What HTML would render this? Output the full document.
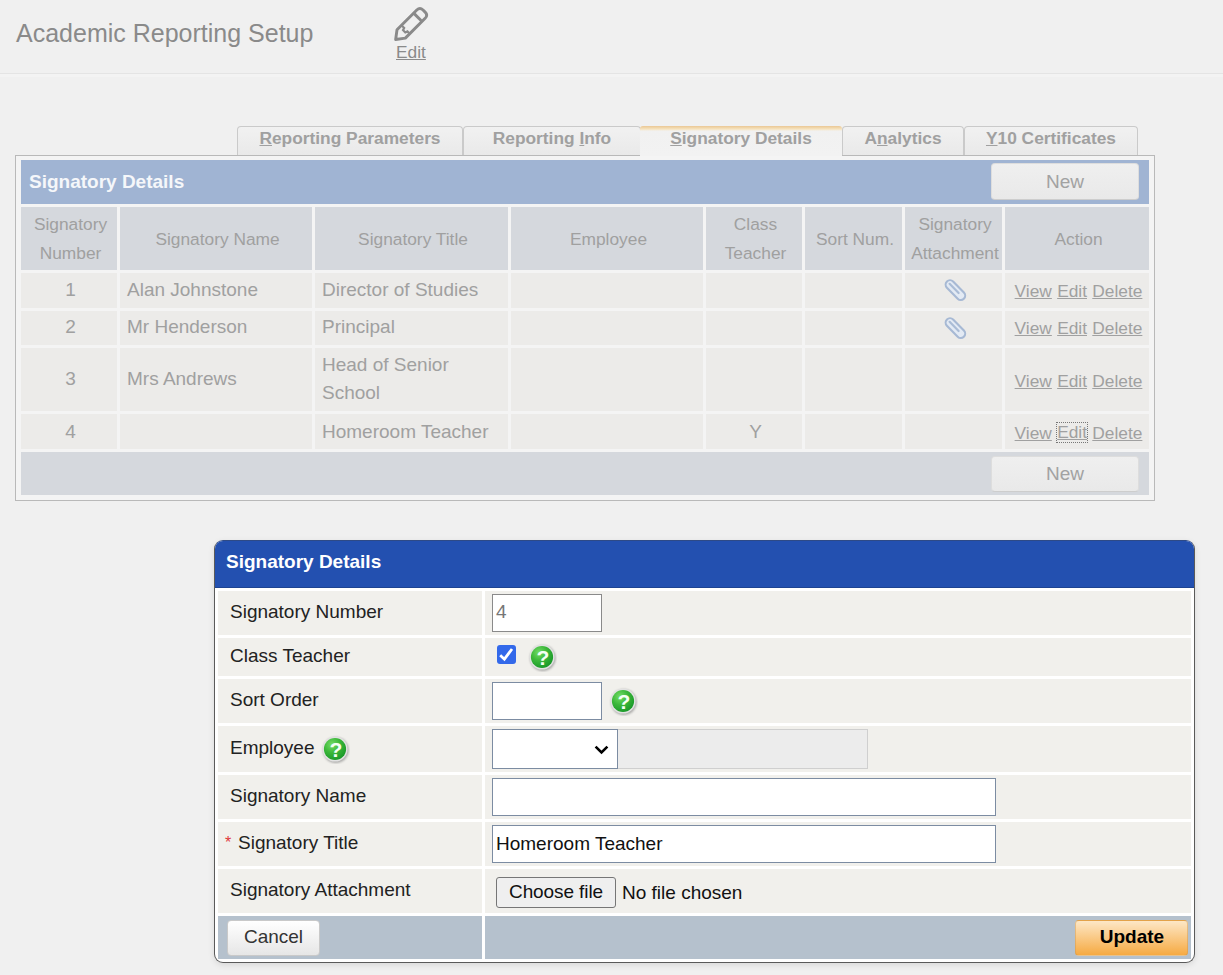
<!DOCTYPE html>
<html><head><meta charset="utf-8">
<style>
*{box-sizing:border-box}
html,body{margin:0;padding:0}
body{width:1223px;height:975px;background:#f0f0f0;position:relative;overflow:hidden;font-family:"Liberation Sans",sans-serif}
.a{position:absolute}
.c{position:absolute;display:flex;align-items:center}
.ctr{justify-content:center;text-align:center}
#title{left:16px;top:19px;font-size:25px;line-height:28px;color:#8a8a8a;white-space:nowrap}
#hline{left:0;top:73px;width:1223px;height:1px;background:#e4e4e4}
#hline2{left:0;top:74px;width:1223px;height:3px;background:#f3f3f3}
#editlink{left:396px;top:42px;font-size:17.33px;line-height:20px;color:#8a8a8a;text-decoration:underline}
.tab{position:absolute;top:126px;height:30px;border:1px solid #cacaca;border-bottom:none;border-radius:4px 4px 0 0;background:linear-gradient(#f1f1f1,#e9e9e9);font-weight:bold;font-size:17.33px;color:#a0a0a0;text-align:center;line-height:22px}
.tab.act{background:linear-gradient(#eac796 0,#f2d9ad 2px,#f6e6c8 3.5px,#f1f1f1 5px,#f2f2f2 100%);border:none;border-radius:3px 3px 0 0;height:30px;line-height:24px}
.tab u{text-decoration:underline}
#box{left:15px;top:155px;width:1140px;height:346px;border:1px solid #b9b9b9;background:#f4f4f4}
.th{background:#d5d8dd;color:#a0a0a0;font-size:17.33px;line-height:29px;padding-left:3px;padding-top:1px}
.td{background:#ecebe9;color:#a0a0a0;font-size:19px;line-height:28px;padding-bottom:2px}
.btnN{position:absolute;background:linear-gradient(#efefef,#e9e9e9);border:1px solid #dddddd;border-bottom-color:#cdcdcd;border-radius:4px;color:#a2a2a2;font-size:19px;display:flex;align-items:center;justify-content:center}
.lk{color:#a0a0a0;text-decoration:underline;font-size:17.33px}
#form{left:214px;top:540px;width:981px;height:423px;border:1px solid #5a5a5a;border-top-color:#2e4a86;border-radius:9px;background:#fff;overflow:hidden;box-shadow:0 2px 6px rgba(0,0,0,0.10)}
.fl{background:#f1f0ec;color:#222;font-size:19px}
.fi{background:#f1f0ec}
.inp{position:absolute;background:#fff;border:1px solid #7f8ea3}
.help{position:absolute;width:27px;height:27px}
</style></head>
<body>
<div id="title" class="a">Academic Reporting Setup</div>
<svg class="a" style="left:390px;top:3px" width="44" height="42" viewBox="0 0 44 42">
  <g transform="matrix(0.7071,-0.7071,0.7071,0.7071,0,0)" fill="none" stroke="#8a8a8a" stroke-width="2.9" stroke-linejoin="round">
    <path d="M-14 23.9 L14 23.9 Q18.4 23.9 18.4 28.3 L18.4 31.3 Q18.4 35.7 14 35.7 L-14 35.7 L-21.8 29.8 Z"/>
    <path d="M9.6 23.9 L9.6 35.7"/>
    <path d="M-7.6 24.2 L-7.6 27.6 L-10 28.4 L-10 31.6 L-7.8 32.4 L-7.8 35.4" stroke-width="2.2" stroke-linejoin="miter"/>
  </g>
</svg>
<div id="editlink" class="a">Edit</div>
<div id="hline" class="a"></div>
<div id="hline2" class="a"></div>

<!-- tabs -->
<div class="tab" style="left:237px;width:226px"><u>R</u>eporting Parameters</div>
<div class="tab" style="left:463px;width:178px">Reporting <u>I</u>nfo</div>
<div class="tab" style="left:842px;width:122px">A<u>n</u>alytics</div>
<div class="tab" style="left:964px;width:174px"><u>Y</u>10 Certificates</div>

<div id="box" class="a"></div>
<div class="tab act" style="left:640px;width:202px;top:126px;height:30px"><u>S</u>ignatory Details</div>

<!-- table -->
<div class="c" style="left:21px;top:160px;width:1128px;height:44px;background:#a0b4d3;color:#f5f7fa;font-weight:bold;font-size:19px;padding-left:8px">Signatory Details</div>
<div class="btnN" style="left:991px;top:163px;width:148px;height:37px">New</div>

<div class="c ctr th" style="left:21px;top:207px;width:96px;height:63px">Signatory<br>Number</div>
<div class="c ctr th" style="left:120px;top:207px;width:192px;height:63px">Signatory Name</div>
<div class="c ctr th" style="left:315px;top:207px;width:193px;height:63px">Signatory Title</div>
<div class="c ctr th" style="left:511px;top:207px;width:192px;height:63px">Employee</div>
<div class="c ctr th" style="left:706px;top:207px;width:96px;height:63px">Class<br>Teacher</div>
<div class="c ctr th" style="left:805px;top:207px;width:97px;height:63px">Sort Num.</div>
<div class="c ctr th" style="left:905px;top:207px;width:97px;height:63px">Signatory<br>Attachment</div>
<div class="c ctr th" style="left:1005px;top:207px;width:144px;height:63px">Action</div>

<!-- rows generated -->
<div class="c td ctr" style="left:21px;top:273px;width:96px;height:35px;padding-left:3px;">1</div>
<div class="c td" style="left:120px;top:273px;width:192px;height:35px;padding-left:7px;">Alan Johnstone</div>
<div class="c td" style="left:315px;top:273px;width:193px;height:35px;padding-left:7px;">Director of Studies</div>
<div class="c td" style="left:511px;top:273px;width:192px;height:35px;padding-left:7px;"></div>
<div class="c td ctr" style="left:706px;top:273px;width:96px;height:35px;padding-left:3px;"></div>
<div class="c td" style="left:805px;top:273px;width:97px;height:35px;padding-left:7px;"></div>
<div class="c td ctr" style="left:905px;top:273px;width:97px;height:35px;padding-left:3px;"><svg width="28" height="28" viewBox="0 0 28 28" style="margin-left:0px;margin-top:1px"><g stroke-linecap="round" fill="none"><path d="M9 8.6 L19.8 19.6" stroke="#a7b9d4" stroke-width="10.8"/><path d="M9 8.6 L19.8 19.6" stroke="#e3eaf4" stroke-width="6.6"/><path d="M8.6 7.8 L17.6 17" stroke="#aabcd6" stroke-width="2.2"/></g></svg></div>
<div class="c td ctr" style="left:1005px;top:273px;width:144px;height:35px;padding-left:3px;padding-bottom:0;padding-top:0;"><span class="lk">View</span>&nbsp;<span class="lk">Edit</span>&nbsp;<span class="lk">Delete</span></div>
<div class="c td ctr" style="left:21px;top:311px;width:96px;height:34px;padding-left:3px;">2</div>
<div class="c td" style="left:120px;top:311px;width:192px;height:34px;padding-left:7px;">Mr Henderson</div>
<div class="c td" style="left:315px;top:311px;width:193px;height:34px;padding-left:7px;">Principal</div>
<div class="c td" style="left:511px;top:311px;width:192px;height:34px;padding-left:7px;"></div>
<div class="c td ctr" style="left:706px;top:311px;width:96px;height:34px;padding-left:3px;"></div>
<div class="c td" style="left:805px;top:311px;width:97px;height:34px;padding-left:7px;"></div>
<div class="c td ctr" style="left:905px;top:311px;width:97px;height:34px;padding-left:3px;"><svg width="28" height="28" viewBox="0 0 28 28" style="margin-left:0px;margin-top:1px"><g stroke-linecap="round" fill="none"><path d="M9 8.6 L19.8 19.6" stroke="#a7b9d4" stroke-width="10.8"/><path d="M9 8.6 L19.8 19.6" stroke="#e3eaf4" stroke-width="6.6"/><path d="M8.6 7.8 L17.6 17" stroke="#aabcd6" stroke-width="2.2"/></g></svg></div>
<div class="c td ctr" style="left:1005px;top:311px;width:144px;height:34px;padding-left:3px;padding-bottom:0;padding-top:0;"><span class="lk">View</span>&nbsp;<span class="lk">Edit</span>&nbsp;<span class="lk">Delete</span></div>
<div class="c td ctr" style="left:21px;top:348px;width:96px;height:63px;padding-left:3px;">3</div>
<div class="c td" style="left:120px;top:348px;width:192px;height:63px;padding-left:7px;">Mrs Andrews</div>
<div class="c td" style="left:315px;top:348px;width:193px;height:63px;padding-left:7px;">Head of Senior<br>School</div>
<div class="c td" style="left:511px;top:348px;width:192px;height:63px;padding-left:7px;"></div>
<div class="c td ctr" style="left:706px;top:348px;width:96px;height:63px;padding-left:3px;"></div>
<div class="c td" style="left:805px;top:348px;width:97px;height:63px;padding-left:7px;"></div>
<div class="c td ctr" style="left:905px;top:348px;width:97px;height:63px;padding-left:3px;"></div>
<div class="c td ctr" style="left:1005px;top:348px;width:144px;height:63px;padding-left:3px;padding-bottom:0;padding-top:2px;"><span class="lk">View</span>&nbsp;<span class="lk">Edit</span>&nbsp;<span class="lk">Delete</span></div>
<div class="c td ctr" style="left:21px;top:414px;width:96px;height:35px;padding-left:3px;padding-bottom:0px;padding-top:1px;">4</div>
<div class="c td" style="left:120px;top:414px;width:192px;height:35px;padding-left:7px;padding-bottom:0px;padding-top:1px;"></div>
<div class="c td" style="left:315px;top:414px;width:193px;height:35px;padding-left:7px;padding-bottom:0px;padding-top:1px;">Homeroom Teacher</div>
<div class="c td" style="left:511px;top:414px;width:192px;height:35px;padding-left:7px;padding-bottom:0px;padding-top:1px;"></div>
<div class="c td ctr" style="left:706px;top:414px;width:96px;height:35px;padding-left:3px;padding-bottom:0px;padding-top:1px;">Y</div>
<div class="c td" style="left:805px;top:414px;width:97px;height:35px;padding-left:7px;padding-bottom:0px;padding-top:1px;"></div>
<div class="c td ctr" style="left:905px;top:414px;width:97px;height:35px;padding-left:3px;padding-bottom:0px;padding-top:1px;"></div>
<div class="c td ctr" style="left:1005px;top:414px;width:144px;height:35px;padding-left:3px;padding-bottom:0;padding-top:2px;"><span class="lk">View</span>&nbsp;<span class="lk" style="outline:1px dotted #777;outline-offset:0;line-height:19px">Edit</span>&nbsp;<span class="lk">Delete</span></div>

<div class="c" style="left:21px;top:452px;width:1128px;height:43px;background:#d5d8dd"></div>
<div class="btnN" style="left:991px;top:456px;width:148px;height:36px">New</div>

<!-- form -->
<div id="form" class="a">
<div class="c" style="left:0px;top:0px;width:979px;height:47px;background:#2350b0;border-bottom:1px solid #1d4391;color:#fff;font-weight:bold;font-size:19px;padding-left:11px;padding-bottom:5px">Signatory Details</div>
<div class="c fl" style="left:3px;top:50px;width:264px;height:44px;padding-left:12px;padding-bottom:2px">Signatory Number</div>
<div class="c fi" style="left:270px;top:50px;width:706px;height:44px;"></div>
<div class="c fl" style="left:3px;top:97px;width:264px;height:38px;padding-left:12px;padding-bottom:2px">Class Teacher</div>
<div class="c fi" style="left:270px;top:97px;width:706px;height:38px;"></div>
<div class="c fl" style="left:3px;top:138px;width:264px;height:44px;padding-left:12px;padding-bottom:2px">Sort Order</div>
<div class="c fi" style="left:270px;top:138px;width:706px;height:44px;"></div>
<div class="c fl" style="left:3px;top:185px;width:264px;height:46px;padding-left:12px;padding-bottom:3px">Employee</div>
<div class="c fi" style="left:270px;top:185px;width:706px;height:46px;"></div>
<div class="c fl" style="left:3px;top:234px;width:264px;height:44px;padding-left:12px;padding-bottom:2px">Signatory Name</div>
<div class="c fi" style="left:270px;top:234px;width:706px;height:44px;"></div>
<div class="c fl" style="left:3px;top:281px;width:264px;height:44px;padding-left:20px;padding-bottom:2px">Signatory Title</div>
<div class="c fi" style="left:270px;top:281px;width:706px;height:44px;"></div>
<div class="c fl" style="left:3px;top:328px;width:264px;height:44px;padding-left:12px;padding-bottom:2px">Signatory Attachment</div>
<div class="c fi" style="left:270px;top:328px;width:706px;height:44px;"></div>
<div class="c" style="left:3px;top:375px;width:264px;height:43px;background:#b5c1cd"></div>
<div class="c" style="left:270px;top:375px;width:706px;height:43px;background:#b5c1cd"></div>
<div class="a" style="left:277px;top:53px;width:110px;height:38px;background:#fff;border:1px solid #8a8a8a;font-size:19px;color:#767676;padding-left:3px;line-height:34px">4</div>
<svg class="a" style="left:282px;top:104px" width="19" height="19" viewBox="0 0 19 19"><rect x="0" y="0" width="19" height="19" rx="3" fill="#3369ea"/><path d="M3.2 10.2 L7.4 14.2 L15 4" fill="none" stroke="#fff" stroke-width="2.8"/></svg>
<svg class="a" style="left:312.29999999999995px;top:100.60000000000002px" width="30" height="30" viewBox="0 0 30 30"><defs><radialGradient id="h1" cx="36%" cy="30%" r="72%"><stop offset="0" stop-color="#74dc66"/><stop offset="0.5" stop-color="#3cb83a"/><stop offset="1" stop-color="#1b9a2a"/></radialGradient><filter id="h1f" x="-30%" y="-30%" width="160%" height="160%"><feGaussianBlur stdDeviation="0.8"/></filter></defs><circle cx="15.8" cy="16.1" r="12.8" fill="#7a7a7a" opacity="0.6" filter="url(#h1f)"/><circle cx="15" cy="15" r="12.6" fill="#e2e2e2"/><circle cx="15" cy="15" r="11.1" fill="url(#h1)"/><text x="15.8" y="22.6" font-size="21" font-weight="bold" fill="#f4fff4" text-anchor="middle" font-family="Liberation Sans">?</text></svg>
<div class="a" style="left:277px;top:141px;width:110px;height:38px;background:#fff;border:1px solid #7c8ca2"></div>
<svg class="a" style="left:392.70000000000005px;top:144.70000000000005px" width="30" height="30" viewBox="0 0 30 30"><defs><radialGradient id="h2" cx="36%" cy="30%" r="72%"><stop offset="0" stop-color="#74dc66"/><stop offset="0.5" stop-color="#3cb83a"/><stop offset="1" stop-color="#1b9a2a"/></radialGradient><filter id="h2f" x="-30%" y="-30%" width="160%" height="160%"><feGaussianBlur stdDeviation="0.8"/></filter></defs><circle cx="15.8" cy="16.1" r="12.8" fill="#7a7a7a" opacity="0.6" filter="url(#h2f)"/><circle cx="15" cy="15" r="12.6" fill="#e2e2e2"/><circle cx="15" cy="15" r="11.1" fill="url(#h2)"/><text x="15.8" y="22.6" font-size="21" font-weight="bold" fill="#f4fff4" text-anchor="middle" font-family="Liberation Sans">?</text></svg>
<svg class="a" style="left:105px;top:193px" width="30" height="30" viewBox="0 0 30 30"><defs><radialGradient id="h3" cx="36%" cy="30%" r="72%"><stop offset="0" stop-color="#74dc66"/><stop offset="0.5" stop-color="#3cb83a"/><stop offset="1" stop-color="#1b9a2a"/></radialGradient><filter id="h3f" x="-30%" y="-30%" width="160%" height="160%"><feGaussianBlur stdDeviation="0.8"/></filter></defs><circle cx="15.8" cy="16.1" r="12.8" fill="#7a7a7a" opacity="0.6" filter="url(#h3f)"/><circle cx="15" cy="15" r="12.6" fill="#e2e2e2"/><circle cx="15" cy="15" r="11.1" fill="url(#h3)"/><text x="15.8" y="22.6" font-size="21" font-weight="bold" fill="#f4fff4" text-anchor="middle" font-family="Liberation Sans">?</text></svg>
<div class="a" style="left:277px;top:188px;width:126px;height:40px;background:#fff;border:1px solid #7c8ca2"></div>
<svg class="a" style="left:379px;top:204px" width="15" height="10" viewBox="0 0 15 10"><path d="M1.6 1.6 L7.5 7.5 L13.4 1.6" fill="none" stroke="#000" stroke-width="2.6"/></svg>
<div class="a" style="left:403px;top:188px;width:250px;height:40px;background:#ececec;border:1px solid #cfcfcf;border-left:none"></div>
<div class="a" style="left:277px;top:237px;width:504px;height:38px;background:#fff;border:1px solid #7c8ca2"></div>
<div class="a" style="left:277px;top:284px;width:504px;height:38px;background:#fff;border:1px solid #7c8ca2;font-size:19px;color:#111;padding-left:3px;line-height:35px">Homeroom Teacher</div>
<div class="a" style="left:281px;top:336px;width:120px;height:31px;background:#efefef;border:1px solid #767676;border-radius:3px;font-size:19px;color:#111;text-align:center;line-height:27px;letter-spacing:-0.1px">Choose file</div>
<div class="a" style="left:407px;top:336px;width:200px;height:31px;font-size:19px;color:#111;line-height:31px;white-space:nowrap">No file chosen</div>
<div class="a" style="left:10px;top:293px;width:10px;height:14px;font-size:16px;color:#e03a3a;line-height:17px">*</div>
<div class="a" style="left:12px;top:379px;width:93px;height:36px;background:linear-gradient(#ffffff,#e6e6e6);border:1px solid #c9c9c9;border-radius:4px;font-size:19px;color:#333;text-align:center;line-height:31px">Cancel</div>
<div class="a" style="left:860px;top:379px;width:113px;height:36px;background:linear-gradient(#fde7c6,#f6aa42);border:1px solid rgba(205,150,80,0.45);border-radius:4px;font-size:19px;font-weight:bold;color:#000;text-align:center;line-height:32px;padding-left:1px">Update</div>
</div>
</body></html>
